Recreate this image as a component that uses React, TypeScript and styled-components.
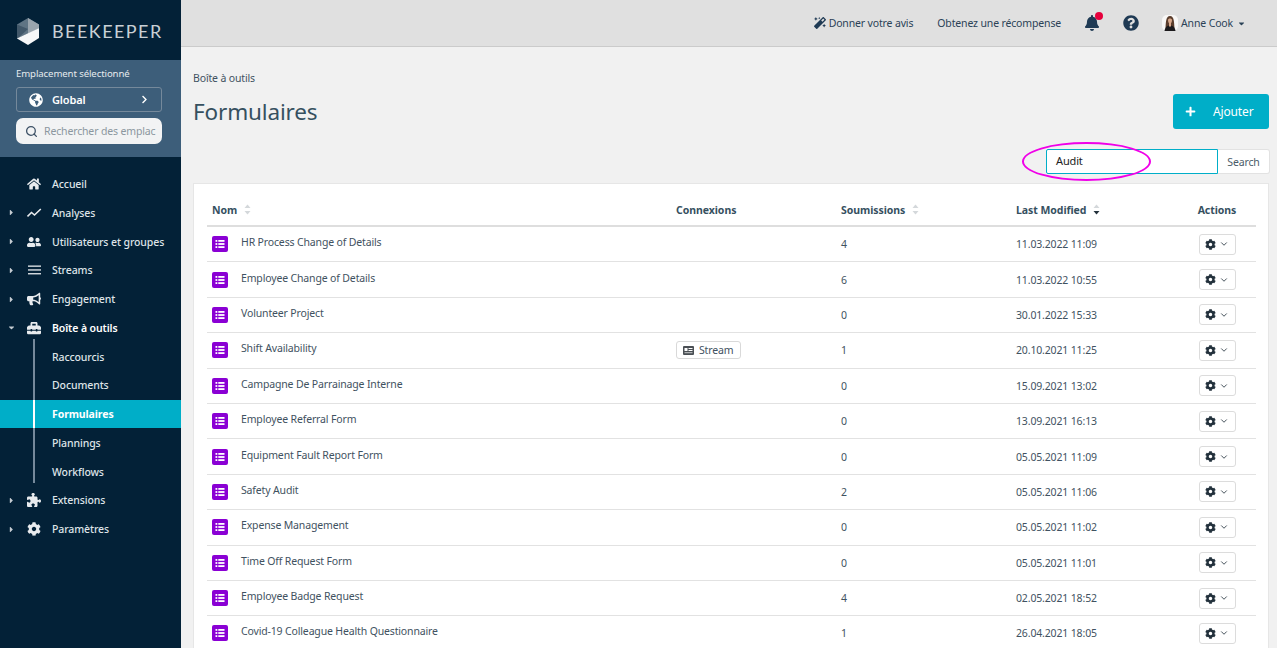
import * as React from "react";
import styled, { createGlobalStyle } from "styled-components";
import {
  FaBell,
  FaBullhorn,
  FaCaretDown,
  FaCaretRight,
  FaChevronRight,
  FaCog,
  FaGlobeAmericas,
  FaHome,
  FaMagic,
  FaPlus,
  FaQuestionCircle,
  FaToolbox,
  FaUserFriends
} from "react-icons/fa";
import { FaPuzzlePiece } from "react-icons/fa6";
import { FiChevronDown } from "react-icons/fi";
import { Search } from "lucide-react";

const TrendIcon = () => (
  <svg width="15" height="10" viewBox="0 0 15 10" fill="none" stroke="currentColor" strokeWidth="1.6">
    <path d="M0.5 8.5 L4.5 4.5 L7.5 7 L13.8 1" />
  </svg>
);

const LinesIcon = () => (
  <svg width="13" height="10" viewBox="0 0 13 10" fill="currentColor">
    <rect y="0.5" width="13" height="1.3" />
    <rect y="4.3" width="13" height="1.3" />
    <rect y="8.1" width="13" height="1.3" />
  </svg>
);

const navItems = [
  { id: "home", label: "Accueil", icon: <FaHome />, arrow: false },
  { id: "stats", label: "Analyses", icon: <TrendIcon />, arrow: true },
  { id: "users", label: "Utilisateurs et groupes", icon: <FaUserFriends />, arrow: true },
  { id: "streams", label: "Streams", icon: <LinesIcon />, arrow: true },
  { id: "engage", label: "Engagement", icon: <FaBullhorn />, arrow: true }
];

const subItems = ["Raccourcis", "Documents", "Formulaires", "Plannings", "Workflows"];

const rows = [
  { name: "HR Process Change of Details", count: 4, date: "11.03.2022 11:09" },
  { name: "Employee Change of Details", count: 6, date: "11.03.2022 10:55" },
  { name: "Volunteer Project", count: 0, date: "30.01.2022 15:33" },
  { name: "Shift Availability", count: 1, date: "20.10.2021 11:25", stream: true },
  { name: "Campagne De Parrainage Interne", count: 0, date: "15.09.2021 13:02" },
  { name: "Employee Referral Form", count: 0, date: "13.09.2021 16:13" },
  { name: "Equipment Fault Report Form", count: 0, date: "05.05.2021 11:09" },
  { name: "Safety Audit", count: 2, date: "05.05.2021 11:06" },
  { name: "Expense Management", count: 0, date: "05.05.2021 11:02" },
  { name: "Time Off Request Form", count: 0, date: "05.05.2021 11:01" },
  { name: "Employee Badge Request", count: 4, date: "02.05.2021 18:52" },
  { name: "Covid-19 Colleague Health Questionnaire", count: 1, date: "26.04.2021 18:05" }
];

const Logo = () => (
  <svg width="24" height="27" viewBox="0 0 24 27">
    <path d="M12 0 L23 6.5 L23 10 L1 21 L1 6.5 Z" fill="#5f7484" />
    <path d="M12 0 L23 6.5 L23 10 L12 15.5 Z" fill="#9aa5ae" />
    <path d="M1 6.5 L12 11 L1 21 Z" fill="#42586a" />
    <path d="M23 10 L23 20 L12 27 L1 20.5 Z" fill="#f6f7f8" />
  </svg>
);

const FormIcon = () => (
  <svg width="16" height="16" viewBox="0 0 16 16">
    <rect width="16" height="16" rx="2" fill="#8a00d4" />
    <g fill="#fff">
      <rect x="3.5" y="4" width="1.8" height="1.8" />
      <rect x="6.3" y="4" width="6.2" height="1.8" />
      <rect x="3.5" y="7.1" width="1.8" height="1.8" />
      <rect x="6.3" y="7.1" width="6.2" height="1.8" />
      <rect x="3.5" y="10.2" width="1.8" height="1.8" />
      <rect x="6.3" y="10.2" width="6.2" height="1.8" />
    </g>
  </svg>
);

const StreamIcon = () => (
  <svg width="11" height="9" viewBox="0 0 11 9">
    <rect width="11" height="9" rx="1" fill="#4a4f54" />
    <rect x="1.5" y="2" width="3" height="3" fill="#fff" />
    <rect x="5.5" y="2" width="4" height="1" fill="#fff" />
    <rect x="5.5" y="4" width="4" height="1" fill="#fff" />
    <rect x="1.5" y="6.2" width="8" height="1" fill="#c9cacb" />
  </svg>
);

const Avatar = () => (
  <svg width="16" height="16" viewBox="0 0 16 16">
    <rect width="16" height="16" rx="5" fill="#f8f7f6" />
    <path d="M3.5 13 C4 8 3.5 1 8 1 C12.5 1 12 8 12.5 13 Z" fill="#5a3d2c" />
    <path d="M6 5 C6 3 10 3 10 5 C10 7.4 9 8.6 8 8.6 C7 8.6 6 7.4 6 5 Z" fill="#d9a98c" />
    <path d="M2.5 16 C3 12 5 11 7 10.5 L9 10.5 C11 11 13 12 13.5 16 Z" fill="#1c1a1c" />
    <path d="M7 8 L9 8 L9 11 L8 12 L7 11 Z" fill="#d9a98c" />
  </svg>
);

const SortArrows = ({ active }: { active?: boolean }) => (
  <SortBox width="7" height="11" viewBox="0 0 7 11">
    <path d="M3.5 0.5 L6.5 4 L0.5 4 Z" fill="#d4d8db" />
    <path d="M0.5 7 L6.5 7 L3.5 10.5 Z" fill={active ? "#23313c" : "#d4d8db"} />
  </SortBox>
);

export default function App() {
  return (
    <Page>
      <GlobalStyle />
      <Sidebar>
        <LogoBar>
          <Logo />
          <LogoText>BEEKEEPER</LogoText>
        </LogoBar>
        <LocationPanel>
          <LocationLabel>Emplacement sélectionné</LocationLabel>
          <LocationButton>
            <FaGlobeAmericas />
            <LocationName>Global</LocationName>
            <FaChevronRight />
          </LocationButton>
          <LocationSearch>
            <Search size={13} strokeWidth={2.4} />
            <span>Rechercher des emplac</span>
          </LocationSearch>
        </LocationPanel>
        <Nav>
          {navItems.map(item => (
            <NavRow key={item.id}>
              <Caret>{item.arrow && <FaCaretRight />}</Caret>
              <NavIcon>{item.icon}</NavIcon>
              {item.label}
            </NavRow>
          ))}
          <NavRow $open>
            <Caret>
              <FaCaretDown />
            </Caret>
            <NavIcon>
              <FaToolbox />
            </NavIcon>
            Boîte à outils
          </NavRow>
          <SubList>
            {subItems.map(label => (
              <SubRow key={label} $active={label === "Formulaires"}>
                {label}
              </SubRow>
            ))}
          </SubList>
          <NavRow>
            <Caret>
              <FaCaretRight />
            </Caret>
            <NavIcon>
              <FaPuzzlePiece />
            </NavIcon>
            Extensions
          </NavRow>
          <NavRow>
            <Caret>
              <FaCaretRight />
            </Caret>
            <NavIcon>
              <FaCog />
            </NavIcon>
            Paramètres
          </NavRow>
        </Nav>
      </Sidebar>
      <Main>
        <TopBar>
          <TopLink>
            <FaMagic />
            Donner votre avis
          </TopLink>
          <TopLink>Obtenez une récompense</TopLink>
          <BellWrap>
            <FaBell />
            <BellDot />
          </BellWrap>
          <HelpIcon>
            <FaQuestionCircle />
          </HelpIcon>
          <UserBox>
            <Avatar />
            Anne Cook
            <FaCaretDown />
          </UserBox>
        </TopBar>
        <Content>
          <Crumb>Boîte à outils</Crumb>
          <TitleRow>
            <Title>Formulaires</Title>
            <AddButton>
              <FaPlus />
              Ajouter
            </AddButton>
          </TitleRow>
          <SearchRow>
            <SearchGroup>
              <SearchInput>Audit</SearchInput>
              <SearchButton>Search</SearchButton>
              <Highlight />
            </SearchGroup>
          </SearchRow>
          <Card>
            <HeaderRow>
              <NameCell>
                Nom
                <SortArrows />
              </NameCell>
              <LinkCell>Connexions</LinkCell>
              <CountCell>
                Soumissions
                <SortArrows />
              </CountCell>
              <DateCell>
                Last Modified
                <SortArrows active />
              </DateCell>
              <ActionCell>Actions</ActionCell>
            </HeaderRow>
            {rows.map(row => (
              <BodyRow key={row.name}>
                <NameCell>
                  <FormIcon />
                  <RowName>{row.name}</RowName>
                </NameCell>
                <LinkCell>
                  {row.stream && (
                    <StreamTag>
                      <StreamIcon />
                      Stream
                    </StreamTag>
                  )}
                </LinkCell>
                <CountCell>{row.count}</CountCell>
                <DateCell>{row.date}</DateCell>
                <ActionCell>
                  <ActionButton>
                    <FaCog />
                    <FiChevronDown />
                  </ActionButton>
                </ActionCell>
              </BodyRow>
            ))}
          </Card>
        </Content>
      </Main>
    </Page>
  );
}

const GlobalStyle = createGlobalStyle`
  html, body {
    margin: 0;
    height: 100%;
    overflow: hidden;
    background: #f1f1f1;
    font-family: "Noto Sans", "Liberation Sans", sans-serif;
    letter-spacing: -0.15px;
  }
`;

const Page = styled.div`
  display: flex;
  width: 1277px;
  height: 648px;
  overflow: hidden;
`;

const Sidebar = styled.aside`
  flex: 0 0 181px;
  background: #032137;
  color: #dfe4e8;
`;

const LogoBar = styled.div`
  display: flex;
  align-items: center;
  gap: 12px;
  height: 60px;
  padding: 2px 0 0 16px;
  box-sizing: border-box;
`;

const LogoText = styled.span`
  font-family: "Lato", sans-serif;
  font-size: 18px;
  letter-spacing: 1.45px;
  color: #c9d0d5;
`;

const LocationPanel = styled.div`
  height: 97px;
  box-sizing: border-box;
  padding: 7px 19px 0 16px;
  background: #3d5e7a;
`;

const LocationLabel = styled.div`
  font-size: 9.6px;
  line-height: 14px;
  letter-spacing: -0.1px;
  color: #e6eaee;
`;

const LocationButton = styled.div`
  display: flex;
  align-items: center;
  box-sizing: border-box;
  height: 25px;
  margin-top: 6px;
  padding: 0 12px 0 12px;
  border: 1px solid #75899b;
  border-radius: 3px;
  color: #fff;
  font-size: 11px;
  font-weight: 600;
  svg:first-child {
    font-size: 14px;
  }
  svg:last-child {
    font-size: 9px;
  }
`;

const LocationName = styled.span`
  flex: 1;
  margin-left: 9px;
`;

const LocationSearch = styled.div`
  display: flex;
  align-items: center;
  gap: 6px;
  height: 26px;
  margin-top: 6px;
  padding-left: 9px;
  overflow: hidden;
  white-space: nowrap;
  border-radius: 7px;
  background: #f2f3f4;
  color: #8c979f;
  font-size: 10.5px;
  svg {
    flex: none;
    color: #3d5166;
  }
`;

const Nav = styled.nav`
  padding-top: 12.7px;
`;

const NavRow = styled.div<{ $open?: boolean }>`
  display: flex;
  align-items: center;
  height: 28.75px;
  font-size: 10.5px;
  letter-spacing: -0.1px;
  font-weight: ${props => (props.$open ? 600 : 500)};
  color: ${props => (props.$open ? "#ffffff" : "#dfe4e8")};
`;

const Caret = styled.span`
  display: flex;
  justify-content: center;
  width: 22px;
  font-size: 9px;
  color: #c5ccd2;
`;

const NavIcon = styled.span`
  display: flex;
  justify-content: center;
  width: 24px;
  margin-right: 6px;
  font-size: 14px;
  color: #e8ebee;
`;

const SubList = styled.div`
  position: relative;
  &::before {
    content: "";
    position: absolute;
    top: -3px;
    bottom: 3px;
    left: 33px;
    width: 2px;
    background: #75899b;
    z-index: 1;
  }
`;

const SubRow = styled.div<{ $active?: boolean }>`
  position: relative;
  display: flex;
  align-items: center;
  height: 28.75px;
  padding-left: 52px;
  font-size: 10.5px;
  letter-spacing: -0.1px;
  font-weight: ${props => (props.$active ? 700 : 500)};
  color: ${props => (props.$active ? "#ffffff" : "#dfe4e8")};
  background: ${props => (props.$active ? "#00aec8" : "transparent")};
  &::before {
    content: "";
    position: absolute;
    top: 0;
    bottom: 0;
    left: 33px;
    width: 2px;
    z-index: 2;
    background: ${props => (props.$active ? "#ffffff" : "transparent")};
  }
`;

const Main = styled.main`
  flex: 1;
  min-width: 0;
  display: flex;
  flex-direction: column;
`;

const TopBar = styled.header`
  display: flex;
  align-items: center;
  justify-content: flex-end;
  flex: none;
  height: 47px;
  box-sizing: border-box;
  padding-right: 31px;
  background: #e0e0e0;
  border-bottom: 1px solid #cbcbcb;
  color: #2b4257;
  font-size: 10.5px;
`;

const TopLink = styled.span`
  display: flex;
  align-items: center;
  gap: 3px;
  margin-right: 24px;
  svg {
    font-size: 12px;
    color: #1f3a54;
  }
`;

const BellWrap = styled.span`
  position: relative;
  display: flex;
  margin: 0 23px 0 -1px;
  font-size: 16px;
  color: #1f3a54;
`;

const BellDot = styled.span`
  position: absolute;
  top: -3px;
  right: -3px;
  width: 8px;
  height: 8px;
  border-radius: 50%;
  background: #e6003c;
`;

const HelpIcon = styled.span`
  display: flex;
  margin-right: 23px;
  font-size: 16px;
  color: #1f3a54;
`;

const UserBox = styled.span`
  display: flex;
  align-items: center;
  gap: 3px;
  svg:last-child {
    margin-left: 1px;
    font-size: 9px;
  }
`;

const Content = styled.div`
  flex: 1;
  min-height: 0;
  padding: 24px 8px 0 12px;
  color: #3f5261;
`;

const Crumb = styled.div`
  font-size: 10.5px;
  line-height: 14px;
  color: #3f5261;
`;

const TitleRow = styled.div`
  display: flex;
  align-items: flex-start;
  justify-content: space-between;
  margin-top: 9px;
`;

const Title = styled.h1`
  margin: 0;
  padding-top: 3px;
  font-size: 22.5px;
  line-height: 30px;
  font-weight: 400;
  color: #36505f;
`;

const AddButton = styled.div`
  display: flex;
  align-items: center;
  gap: 17px;
  box-sizing: border-box;
  width: 96px;
  height: 35px;
  padding: 0 12px;
  border-radius: 3px;
  background: #00aec8;
  color: #fff;
  font-size: 12px;
  svg {
    font-size: 11px;
  }
`;

const SearchRow = styled.div`
  display: flex;
  justify-content: flex-end;
  margin: 20px -1px 0 0;
`;

const SearchGroup = styled.div`
  position: relative;
  display: flex;
  height: 25px;
`;

const SearchInput = styled.div`
  width: 161px;
  padding-left: 9px;
  border: 1px solid #00aec8;
  border-radius: 2px 0 0 2px;
  background: #fff;
  color: #222;
  font-size: 11px;
  line-height: 22px;
`;

const SearchButton = styled.div`
  width: 51px;
  border: 1px solid #e2e2e2;
  border-left: none;
  border-radius: 0 3px 3px 0;
  background: #fff;
  color: #4b5c69;
  font-size: 10.5px;
  line-height: 25px;
  text-align: center;
`;

const Highlight = styled.span`
  position: absolute;
  top: -7px;
  left: -24px;
  width: 125px;
  height: 35px;
  border: 2px solid #f000e8;
  border-radius: 50%;
`;

const Card = styled.section`
  margin-top: 9px;
  padding: 0 12px 0 13px;
  background: #fff;
  border: 1px solid #e6e6e6;
  border-bottom: none;
  font-size: 10.5px;
`;

const HeaderRow = styled.div`
  display: flex;
  align-items: center;
  height: 43px;
  padding-top: 10px;
  box-sizing: border-box;
  border-bottom: 2px solid #dedede;
  font-weight: 700;
  letter-spacing: -0.05px;
  color: #36505f;
`;

const BodyRow = styled.div`
  display: flex;
  align-items: center;
  height: 35.4px;
  box-sizing: border-box;
  border-bottom: 1px solid #e2e2e2;
`;

const NameCell = styled.div`
  display: flex;
  align-items: center;
  flex: 0 0 469px;
  padding-left: 5px;
  box-sizing: border-box;
`;

const RowName = styled.span`
  margin-left: 13px;
  margin-top: -4px;
`;

const LinkCell = styled.div`
  flex: 0 0 165px;
`;

const CountCell = styled.div`
  display: flex;
  align-items: center;
  flex: 0 0 175px;
`;

const DateCell = styled.div`
  display: flex;
  align-items: center;
  flex: 0 0 167px;
`;

const ActionCell = styled.div`
  display: flex;
  flex: 1;
  justify-content: center;
  padding-right: 5px;
`;

const SortBox = styled.svg`
  margin-left: 7px;
`;

const StreamTag = styled.span`
  display: inline-flex;
  align-items: center;
  gap: 5px;
  box-sizing: border-box;
  width: 65px;
  height: 18px;
  padding: 0 6px;
  border: 1px solid #d9d9d9;
  border-radius: 3px;
  color: #3f5261;
`;

const ActionButton = styled.div`
  display: flex;
  align-items: center;
  justify-content: center;
  gap: 3px;
  box-sizing: border-box;
  width: 37px;
  height: 21px;
  border: 1px solid #dcdcdc;
  border-radius: 3px;
  color: #23313c;
  svg:first-child {
    font-size: 11px;
  }
  svg:last-child {
    font-size: 10px;
    color: #23313c;
  }
`;
